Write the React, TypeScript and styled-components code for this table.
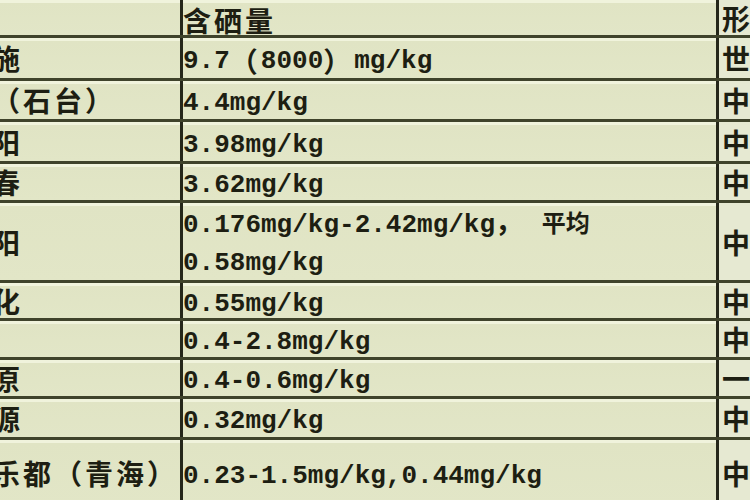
import React from 'react';
import styled, { createGlobalStyle } from 'styled-components';

const GlobalStyle = createGlobalStyle`
  html, body {
    margin: 0;
    padding: 0;
    background: #e1e5c5;
  }
`;

const Sheet = styled.div`
  width: 750px;
  height: 500px;
  overflow: hidden;
  background: #e1e5c5;
  color: #1d1e12;
  font-family: "Liberation Mono", "Noto Sans CJK SC", monospace;
  font-size: 26px;
  font-weight: bold;
`;

const Table = styled.div`
  display: flex;
  flex-direction: column;
  width: 980px;
  margin-left: -109px;
`;

const Row = styled.div<{ $h: number }>`
  display: grid;
  grid-template-columns: 289px 536px 155px;
  height: ${(p) => p.$h}px;
  border-bottom: 3px solid #3f432b;
  background: linear-gradient(#f0f3dc 0, #f0f3dc 3px, #e0e4c4 3px, #e2e6c7 100%);
  flex-shrink: 0;
`;

const Cell = styled.div`
  display: flex;
  align-items: center;
  white-space: nowrap;
  overflow: hidden;
  line-height: 38px;
`;

const NameCell = styled(Cell)`
  padding-left: 8px;
`;

const ValueCell = styled(Cell)<{ $head?: boolean }>`
  border-left: 3px solid #25271a;
  padding-top: ${(p) => (p.$head ? 4 : 6)}px;
`;

const Lines = styled.div`
  display: flex;
  flex-direction: column;
  margin-top: -6px;
`;

const KindCell = styled(Cell)`
  border-left: 3px solid #25271a;
  padding-left: 3px;
  background: #e6e9d2;
`;

const Han = styled.span<{ $small?: boolean }>`
  font-family: "Noto Sans CJK SC", sans-serif;
  font-size: ${(p) => (p.$small ? 24 : 28)}px;
  letter-spacing: ${(p) => (p.$small ? 0 : 3)}px;
  font-weight: 700;
`;

type Item = {
  name: string;
  value: React.ReactNode;
  kind: string;
  h: number;
};

const rows: Item[] = [
  { name: '湖北恩施', value: <>9.7<Han>（</Han>8000<Han>）</Han> mg/kg</>, kind: '世界第一', h: 40 },
  { name: '安徽省（石台）', value: '4.4mg/kg', kind: '中国', h: 38 },
  { name: '陕西紫阳', value: '3.98mg/kg', kind: '中国', h: 39 },
  { name: '江西宜春', value: '3.62mg/kg', kind: '中国', h: 36 },
  {
    name: '贵州开阳',
    value: (
      <Lines>
        <span>
          0.176mg/kg-2.42mg/kg<Han>，</Han> <Han $small>平均</Han>
        </span>
        <span>0.58mg/kg</span>
      </Lines>
    ),
    kind: '中国',
    h: 77,
  },
  { name: '湖南新化', value: '0.55mg/kg', kind: '中国', h: 35 },
  { name: '海南', value: '0.4-2.8mg/kg', kind: '中国', h: 36 },
  { name: '宁夏固原', value: '0.4-0.6mg/kg', kind: '一般', h: 36 },
  { name: '湖南桃源', value: '0.32mg/kg', kind: '中国', h: 38 },
  { name: '海东市乐都（青海）', value: '0.23-1.5mg/kg,0.44mg/kg', kind: '中国', h: 66 },
];

export default function App() {
  return (
    <>
      <GlobalStyle />
      <Sheet>
        <Table>
          <Row $h={35}>
            <NameCell />
            <ValueCell $head>
              <Han>含硒量</Han>
            </ValueCell>
            <KindCell>
              <Han>形成</Han>
            </KindCell>
          </Row>
          {rows.map((r) => (
            <Row key={r.name} $h={r.h}>
              <NameCell>
                <Han>{r.name}</Han>
              </NameCell>
              <ValueCell>{r.value}</ValueCell>
              <KindCell>
                <Han>{r.kind}</Han>
              </KindCell>
            </Row>
          ))}
        </Table>
      </Sheet>
    </>
  );
}
